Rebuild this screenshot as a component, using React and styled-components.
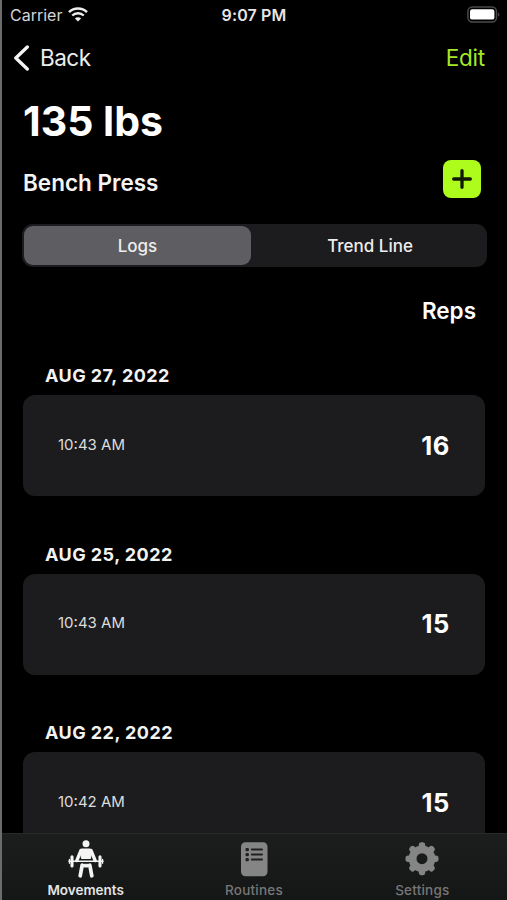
import React from 'react';
import styled, { createGlobalStyle } from 'styled-components';

const GlobalStyle = createGlobalStyle`
  * {
    box-sizing: border-box;
  }
  body {
    margin: 0;
    background: #000;
    font-family: Inter, "Liberation Sans", sans-serif;
    -webkit-font-smoothing: antialiased;
  }
  button {
    font-family: inherit;
    border: 0;
    padding: 0;
    background: none;
    color: inherit;
  }
`

const Screen = styled.div`
  width: 507px;
  height: 900px;
  display: flex;
  flex-direction: column;
  overflow: hidden;
  background: #000;
  color: #fff;
  border-left: 2px solid #6c6c6c;
`

const StatusBar = styled.header`
  height: 30px;
  flex: none;
  display: grid;
  grid-template-columns: 1fr auto 1fr;
  align-items: center;
  padding: 0 7px 0 8px;
`
const Carrier = styled.div`
  display: flex;
  align-items: center;
  gap: 6px;
  font-size: 16px;
  line-height: 30px;
  color: #d4d4d4;

  svg {
    margin-top: -1px;
  }
`
const Clock = styled.div`
  font-size: 16px;
  line-height: 30px;
  font-weight: 600;
  letter-spacing: 0.15px;
  margin-left: -2px;
  color: #e6e6e6;
`
const BatterySlot = styled.div`
  display: flex;
  justify-content: flex-end;
  margin-top: -2px;
`

const NavBar = styled.nav`
  height: 56px;
  flex: none;
  display: flex;
  align-items: center;
  justify-content: space-between;
  padding: 0 22px 0 11px;
`
const BackButton = styled.button`
  display: flex;
  align-items: center;
  gap: 10px;
  font-size: 22.5px;
  line-height: 30px;
  letter-spacing: -0.5px;
  color: #ececec;
`
const EditButton = styled.button`
  font-size: 22.5px;
  line-height: 30px;
  letter-spacing: -0.2px;
  color: #a5e825;
`

const Content = styled.main`
  flex: 1;
  min-height: 0;
  overflow: hidden;
  padding: 0 22px 0 21px;
`
const Title = styled.h1`
  margin: 10px 0 0;
  font-size: 41px;
  line-height: 50px;
  font-weight: 700;
  letter-spacing: 0;
`
const MovementRow = styled.div`
  display: flex;
  justify-content: space-between;
  height: 64px;
  padding: 14px 4px 0 0;
`
const MovementName = styled.h2`
  margin: 8px 0 0;
  font-size: 22.5px;
  line-height: 30px;
  font-weight: 600;
  color: #f4f4f4;
`
const AddButton = styled.button`
  width: 38px;
  height: 38px;
  border-radius: 8px;
  background: #aefc1c;
  display: flex;
  align-items: center;
  justify-content: center;
`

const Segmented = styled.div`
  display: grid;
  grid-template-columns: 227px 1fr;
  margin: 14px -2px 0 -1px;
  height: 43px;
  padding: 2px;
  border-radius: 11px;
  background: #1c1c1e;
`
const Segment = styled.button`
  border-radius: 9px;
  padding: ${props => props.$active ? '1px 0 0' : '1px 0 0 4px'};
  font-size: 17px;
  line-height: 38px;
  font-weight: 500;
  color: #ededed;
  background: ${props => props.$active ? '#5e5d62' : 'transparent'};
`

const ColumnTitle = styled.h3`
  margin: 29px 9px 0 0;
  font-size: 22.5px;
  line-height: 30px;
  font-weight: 600;
  text-align: right;
`

const LogList = styled.div`
  margin-top: 35px;
`
const LogSection = styled.section`
  height: 178.6px;
`
const LogDate = styled.h4`
  margin: 0 0 0 22px;
  font-size: 18px;
  line-height: 30px;
  font-weight: 700;
  letter-spacing: 0.45px;
  color: #f2f2f2;
`
const LogCard = styled.div`
  display: flex;
  align-items: center;
  justify-content: space-between;
  height: 101px;
  margin-top: 4px;
  padding: 0 35px;
  border-radius: 12px;
  background: #1c1c1e;
`
const LogTime = styled.span`
  font-size: 15px;
  line-height: 20px;
  margin-top: -2px;
  color: #dcdcdc;
`
const LogReps = styled.span`
  font-size: 25.5px;
  line-height: 30px;
  font-weight: 700;
  letter-spacing: 0.6px;
`

const TabBar = styled.footer`
  height: 67px;
  flex: none;
  display: grid;
  grid-template-columns: repeat(3, 1fr);
  border-top: 1px solid #29292b;
  background: linear-gradient(#1c1d1d, #151616);
`
const Tab = styled.button`
  display: flex;
  flex-direction: column;
  align-items: center;
  justify-content: flex-start;
  padding: 6px 1px 0 0;
  font-size: 13.5px;
  line-height: 18px;
  font-weight: ${props => props.$active ? 600 : 500};
  letter-spacing: ${props => props.$active ? '0' : '0.2px'};
  color: ${props => props.$active ? '#e4e4e4' : '#777'};

  svg {
    display: block;
    margin-bottom: 3px;
  }
`

const WifiIcon = () => (
  <svg width="20" height="15" viewBox="0 0 20 15" fill="none" stroke="#ededed">
    <path d="M1 5.1C6 .4 14 .4 19 5.1" strokeWidth="2.5" />
    <path d="M4.2 8.5c3.3-3 8.3-3 11.6 0" strokeWidth="2.3" />
    <path d="M10 14.6 6.9 11.5c1.8-1.6 4.4-1.6 6.2 0Z" fill="#ededed" stroke="none" />
  </svg>
)

const BatteryIcon = () => (
  <svg width="33" height="17" viewBox="0 0 33 17">
    <rect x=".9" y=".9" width="28.6" height="15" rx="4.4" fill="none" stroke="#4a4a4a" strokeWidth="1.5" />
    <rect x="3" y="3.2" width="24.4" height="10.4" rx="2.2" fill="#fff" />
    <path d="M31.2 6.4c1.5.6 1.5 3.6 0 4.2Z" fill="#555" />
  </svg>
)

const ChevronIcon = () => (
  <svg width="17" height="26" viewBox="0 0 17 26" fill="none" stroke="#f4f4f4" strokeWidth="3.3" strokeLinecap="round" strokeLinejoin="round">
    <path d="M14.3 2 2.8 13 14.3 24" />
  </svg>
)

const PlusIcon = () => (
  <svg width="20" height="20" viewBox="0 0 20 20" stroke="#101a00" strokeWidth="3.3" strokeLinecap="round">
    <path d="M10 1.7v16.6M1.7 10h16.6" />
  </svg>
)

const LifterIcon = () => (
  <svg width="36" height="38" viewBox="0 0 36 38" fill="#f4f4f4" stroke="#f4f4f4" strokeLinecap="round" strokeLinejoin="round">
    <circle cx="18" cy="3.7" r="3.5" stroke="none" />
    <path d="M13.6 9h8.8l1 4-.9 5.5h-9l-.9-5.5Z" strokeWidth="1" />
    <path d="M13 10.500 8.800 20.600M23 10.500l4.200 10.100" fill="none" strokeWidth="3.4" />
    <path d="M1 21.300h7M28 21.300h7" strokeWidth="1.5" />
    <path d="M9 21.300h18" strokeWidth="1.4" />
    <path d="M4 16.700v9.200M32 16.700v9.200" strokeWidth="3.1" />
    <path d="M1.400 19.300v4M34.600 19.300v4" strokeWidth="1.2" />
    <path d="M14.200 25.200 12.200 35.800M21.800 25.200l2 10.600" fill="none" strokeWidth="3.7" />
    <path d="M13.400 24.300h9.200l-2.600 2.700h-4Z" strokeWidth="1" />
  </svg>
)

const ListIcon = () => (
  <svg width="36" height="38" viewBox="0 0 36 38">
    <rect x="5" y="2.3" width="26.500" height="34" rx="4.5" fill="#858585" />
    <g fill="#202121">
      <rect x="9.5" y="8" width="3.4" height="3.2" rx="1" />
      <rect x="9.5" y="13" width="3.4" height="3.2" rx="1" />
      <rect x="9.5" y="18" width="3.4" height="3.2" rx="1" />
      <rect x="14.8" y="8.6" width="12.2" height="2" rx="1" />
      <rect x="14.8" y="13.6" width="12.2" height="2" rx="1" />
      <rect x="14.8" y="18.6" width="12.2" height="2" rx="1" />
    </g>
  </svg>
)

const TEETH = [0, 45, 90, 135, 180, 225, 270, 315]

const GearIcon = () => (
  <svg width="36" height="38" viewBox="0 0 36 38" fill="#858585">
    <circle cx="18" cy="18.7" r="9.4" fill="none" stroke="#858585" strokeWidth="7.8" />
    {TEETH.map(angle => (
      <rect
        key={angle}
        x="14.8"
        y="2.2"
        width="6.4"
        height="9"
        rx="2.6"
        transform={`rotate(${angle} 18 18.7)`}
      />
    ))}
  </svg>
)

const logs = [
  { date: 'AUG 27, 2022', time: '10:43 AM', reps: 16 },
  { date: 'AUG 25, 2022', time: '10:43 AM', reps: 15 },
  { date: 'AUG 22, 2022', time: '10:42 AM', reps: 15 },
]

function App() {
  return (
    <>
      <GlobalStyle />
      <Screen>
        <StatusBar>
          <Carrier>Carrier <WifiIcon /></Carrier>
          <Clock>9:07 PM</Clock>
          <BatterySlot><BatteryIcon /></BatterySlot>
        </StatusBar>
        <NavBar>
          <BackButton><ChevronIcon />Back</BackButton>
          <EditButton>Edit</EditButton>
        </NavBar>
        <Content>
          <Title>135 lbs</Title>
          <MovementRow>
            <MovementName>Bench Press</MovementName>
            <AddButton aria-label="Add log"><PlusIcon /></AddButton>
          </MovementRow>
          <Segmented>
            <Segment $active>Logs</Segment>
            <Segment>Trend Line</Segment>
          </Segmented>
          <ColumnTitle>Reps</ColumnTitle>
          <LogList>
            {logs.map(log => (
              <LogSection key={log.date}>
                <LogDate>{log.date}</LogDate>
                <LogCard>
                  <LogTime>{log.time}</LogTime>
                  <LogReps>{log.reps}</LogReps>
                </LogCard>
              </LogSection>
            ))}
          </LogList>
        </Content>
        <TabBar>
          <Tab $active><LifterIcon />Movements</Tab>
          <Tab><ListIcon />Routines</Tab>
          <Tab><GearIcon />Settings</Tab>
        </TabBar>
      </Screen>
    </>
  );
}
export default App;
